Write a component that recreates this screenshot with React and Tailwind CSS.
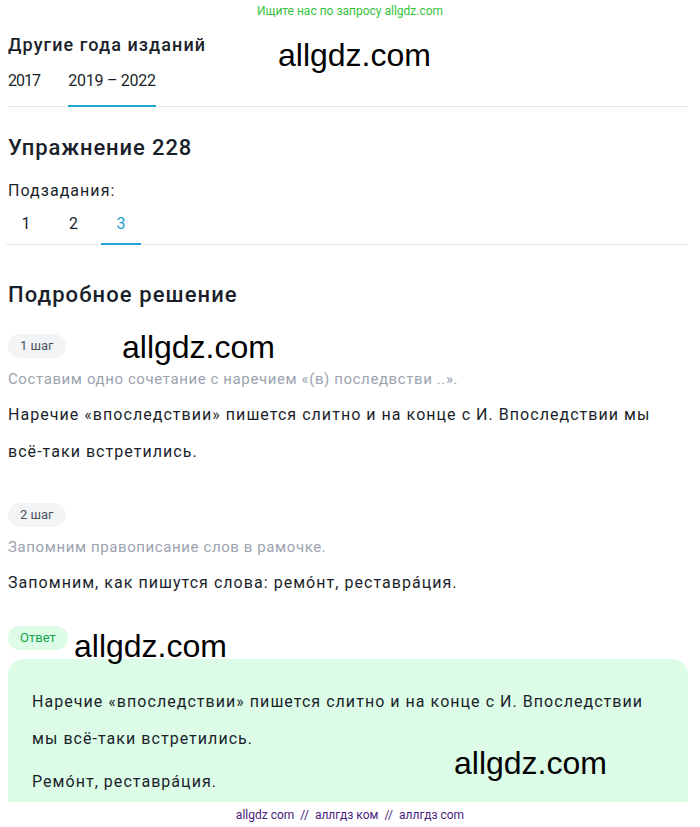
import React from "react";

function Watermark({ className }) {
  return (
    <div
      className={"pointer-events-none absolute text-[32px] leading-none text-black " + className}
      style={{ fontFamily: '"Liberation Sans", Arial, sans-serif' }}
    >
      allgdz.com
    </div>
  );
}

export default function App() {
  return (
    <div
      className="relative flex h-[827px] flex-col overflow-hidden bg-white text-[#1b1f2b]"
      style={{ fontFamily: 'Roboto, "Noto Sans", sans-serif' }}
    >
      <div className="h-[22px] text-center text-[12px] leading-[22px] text-[#36c23a]">
        Ищите нас по запросу allgdz.com
      </div>

      <main className="flex-1 overflow-hidden pl-2 pr-3">
        <h2 className="mt-[11px] text-[18px] font-medium leading-[24px] tracking-[0.06em]">Другие года изданий</h2>
        <div className="mt-[12px] flex gap-7 border-b border-gray-200">
          <div className="pb-[13px] text-[16px] leading-[24px] tracking-[-0.06em]">2017</div>
          <div className="-mb-px border-b-2 border-[#21a5d8] pb-[11px] text-[16px] leading-[24px] tracking-[-0.015em]">
            2019 – 2022
          </div>
        </div>

        <h1 className="mt-[27px] text-[22px] font-medium leading-[28px] tracking-[0.04em]">Упражнение 228</h1>
        <div className="mt-[17px] text-[16px] leading-[24px] tracking-[0.065em]">Подзадания:</div>
        <div className="-ml-[2px] mt-[9px] flex gap-[7.5px] border-b border-gray-200">
          <div className="w-10 pb-[8px] text-center text-[16px] leading-[24px]">1</div>
          <div className="w-10 pb-[8px] text-center text-[16px] leading-[24px]">2</div>
          <div className="-mb-px w-10 border-b-2 border-[#21a5d8] pb-[6px] text-center text-[16px] leading-[24px] text-[#2a9bd0]">
            3
          </div>
        </div>

        <h2 className="mt-[36px] text-[22px] font-medium leading-[28px] tracking-[0.05em]">Подробное решение</h2>

        <div className="mt-[25px] inline-flex h-6 items-center rounded-full bg-[#f3f4f6] px-3 text-[13px] text-[#4b5563]">
          1 шаг
        </div>
        <p className="mt-[11px] text-[15px] leading-[20px] tracking-[0.04em] text-[#9ca3af]">
          Составим одно сочетание с наречием «(в) последвстви ..».
        </p>
        <p className="mt-[6.5px] text-[16px] leading-[37px] tracking-[0.065em]">
          Наречие «впоследствии» пишется слитно и на конце с И. Впоследствии мы всё-таки встретились.
        </p>

        <div className="mt-[33.5px] inline-flex h-6 items-center rounded-full bg-[#f3f4f6] px-3 text-[13px] text-[#4b5563]">
          2 шаг
        </div>
        <p className="mt-[10px] text-[15px] leading-[20px] tracking-[0.04em] text-[#9ca3af]">
          Запомним правописание слов в рамочке.
        </p>
        <p className="mt-[6.5px] text-[16px] leading-[37px] tracking-[0.065em]">
          Запомним, как пишутся слова: ремóнт, реставрáция.
        </p>

        <div className="mt-[25.5px] inline-flex h-6 items-center rounded-full bg-[#dcfce7] px-3 text-[13px] text-[#16a34a]">
          Ответ
        </div>
        <div className="mt-[9px] rounded-2xl bg-[#dcfce7] px-6 pt-6 pb-6">
          <p className="text-[16px] leading-[37px] tracking-[0.065em]">
            Наречие «впоследствии» пишется слитно и на конце с И. Впоследствии мы всё-таки встретились.
          </p>
          <p className="mt-[6px] text-[16px] leading-[37px] tracking-[0.065em]">Ремóнт, реставрáция.</p>
        </div>
      </main>

      <footer className="flex h-[25px] items-center justify-center gap-[6px] bg-white text-[12px] text-[#4a1d7c]">
        <span>allgdz com</span>
        <span>//</span>
        <span>аллгдз ком</span>
        <span>//</span>
        <span>аллгдз com</span>
      </footer>

      <Watermark className="left-[278px] top-[39px]" />
      <Watermark className="left-[122px] top-[331px]" />
      <Watermark className="left-[74px] top-[630px]" />
      <Watermark className="left-[454px] top-[747px]" />
    </div>
  );
}
